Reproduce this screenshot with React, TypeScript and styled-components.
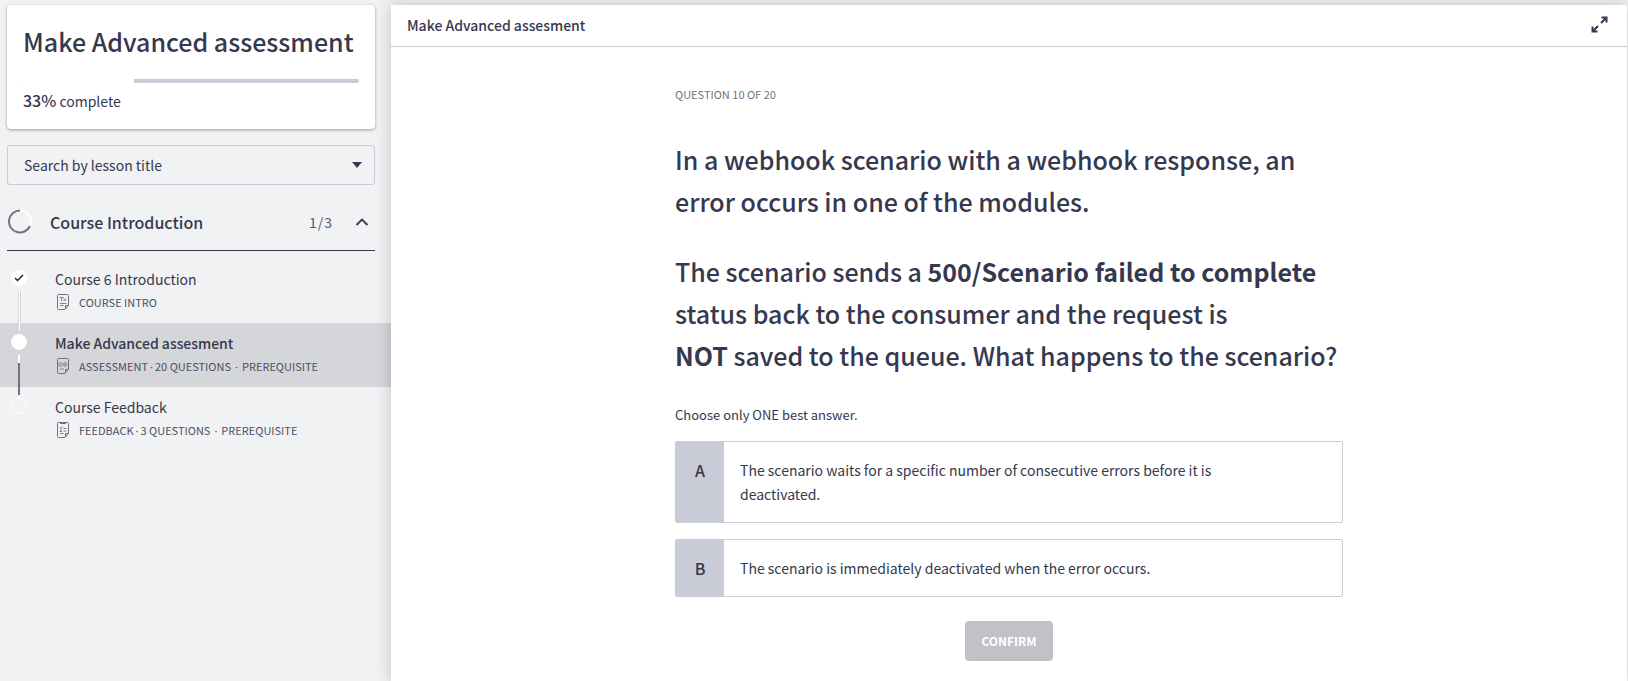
import React, { Fragment, useState } from "react";
import styled, { createGlobalStyle, css } from "styled-components";

const ink = "#35384e";
const line = "#c9cbd6";
const muted = "#6f7287";

const GlobalStyle = createGlobalStyle`
  *, *::before, *::after { box-sizing: border-box; }
  body {
    margin: 0;
    background: #f1f2f4;
    color: ${ink};
    font-family: "Noto Sans CJK SC", "Noto Sans", sans-serif;
    font-size: 14px;
    line-height: 24px;
  }
  h1, h2, p, ol { margin: 0; padding: 0; font-weight: inherit; }
  button, select { font: inherit; color: inherit; }
`;

const Page = styled.div`
  display: grid;
  grid-template-columns: 391px minmax(0, 1fr);
  min-height: 100vh;
  padding: 5px 1px 0 0;
`;

const Sidebar = styled.aside`
  display: flex;
  flex-direction: column;
`;

const SidebarBlock = styled.div`
  margin: 0 16px 16px 7px;
`;

const CourseCard = styled(SidebarBlock)`
  display: flex;
  flex-direction: column;
  padding: 18px 16px 16px;
  border-radius: 4px;
  background: #fff;
  box-shadow: 0 1px 3px rgba(40, 44, 60, 0.45);
`;

const CourseTitle = styled.h1`
  font-size: 25px;
  font-weight: 500;
  line-height: 36px;
  white-space: nowrap;
`;

const Track = styled.div`
  height: 4px;
  margin: 20px 0 6px;
  border-radius: 2px;
  background: ${line};
  overflow: hidden;
`;

const TrackFill = styled.div`
  height: 100%;
  background: #fff;
`;

const Complete = styled.p`
  strong { font-size: 16px; font-weight: 500; line-height: 16px; }
`;

const SearchBox = styled(SidebarBlock)`
  display: grid;
  align-items: center;
  > * { grid-area: 1 / 1; }
  svg { justify-self: end; margin-right: 13px; pointer-events: none; }
`;

const Search = styled.select`
  width: 100%;
  height: 40px;
  padding: 0 32px 0 16px;
  border: 1px solid ${line};
  border-radius: 3px;
  background: transparent;
  appearance: none;
`;

const SectionToggle = styled.button`
  display: flex;
  align-items: center;
  height: 58px;
  margin: -8px 16px 8px 7px;
  padding: 0 6px 0 0;
  border: 0;
  border-bottom: 1px solid ${ink};
  background: none;
  text-align: left;
`;

const SectionTitle = styled.span`
  flex: 1;
  margin-left: 18px;
  font-size: 16px;
  font-weight: 500;
`;

const SectionCount = styled.span`
  margin-right: 22px;
  color: #55586c;
  letter-spacing: 1px;
`;

const Lessons = styled.ol`
  list-style: none;
`;

const Lesson = styled.li<{ $current?: boolean }>`
  position: relative;
  background: ${(p) => (p.$current ? "#d5d6da" : "transparent")};
`;

const LessonLink = styled.a`
  display: block;
  height: 64px;
  padding: 8px 16px 0 55px;
  color: inherit;
  text-decoration: none;
`;

const LessonTitle = styled.span<{ $current?: boolean }>`
  display: block;
  font-weight: ${(p) => (p.$current ? 500 : 400)};
`;

const LessonMeta = styled.span`
  display: flex;
  align-items: center;
  gap: 8px;
  height: 22px;
  color: #4c4f64;
  font-size: 11px;
  white-space: nowrap;
  svg { flex: none; }
`;

const Dot = styled.span<{ $wide?: boolean }>`
  margin: 0 ${(p) => (p.$wide ? 4 : 2)}px;
  font-family: "Noto Sans", sans-serif;
`;

const Marker = styled.span<{ $hollow?: boolean }>`
  position: absolute;
  z-index: 1;
  top: 11px;
  left: 11px;
  display: grid;
  place-items: center;
  width: 16px;
  height: 16px;
  border: 1px solid #fff;
  border-radius: 50%;
  background: ${(p) => (p.$hollow ? "transparent" : "#fff")};
`;

const Connector = styled.span<{ $started?: boolean }>`
  position: absolute;
  z-index: 1;
  top: 32px;
  left: 18px;
  width: 3px;
  height: 40px;
  ${(p) =>
    p.$started
      ? css`
          width: 2px;
          background: linear-gradient(#fff 8px, ${muted} 8px);
        `
      : css`
          border: solid #d5d6da;
          border-width: 0 1px;
          background: #fff;
        `}
`;

const Main = styled.main`
  position: relative;
  display: flex;
  flex-direction: column;
  background: #fff;
  box-shadow: 0 0 14px rgba(40, 44, 60, 0.25);
`;

const TopBar = styled.header`
  display: flex;
  align-items: center;
  justify-content: space-between;
  height: 42px;
  padding: 0 16px 2px;
  border-bottom: 1px solid ${line};
`;

const TopTitle = styled.h2`
  font-size: 14px;
  font-weight: 500;
`;

const IconButton = styled.button`
  display: grid;
  padding: 3px;
  border: 0;
  background: none;
`;

const Question = styled.form`
  display: flex;
  flex-direction: column;
  width: 100%;
  max-width: 668px;
  margin: 0 auto;
  padding: 35px 0 20px;
`;

const Counter = styled.p`
  color: ${muted};
  font-size: 11px;
`;

const Prompt = styled.div`
  display: grid;
  gap: 28px;
  margin: 32px 0 27px;
  font-size: 25px;
  font-weight: 500;
  line-height: 42px;
  strong { font-weight: 700; }
`;

const Hint = styled.p`
  margin-bottom: 14px;
  font-size: 13px;
`;

const Choice = styled.label`
  display: flex;
  margin-bottom: 16px;
  border: 1px solid ${line};
  border-radius: 2px;
  cursor: pointer;
`;

const Radio = styled.input`
  position: absolute;
  opacity: 0;
`;

const Letter = styled.span`
  flex: none;
  width: 48px;
  padding: 16px 0;
  background: ${line};
  font-size: 16px;
  font-weight: 500;
  text-align: center;
`;

const ChoiceText = styled.span`
  padding: 16px 96px 16px 16px;
`;

const Confirm = styled.button`
  align-self: center;
  width: 88px;
  height: 40px;
  margin-top: 8px;
  padding: 0;
  border: 0;
  border-radius: 4px;
  background: #c1c2c8;
  color: #fff;
  font-size: 12px;
  font-weight: 700;
`;

type Kind = "text" | "assessment" | "feedback";

const LessonIcon = ({ kind }: { kind: Kind }) => (
  <svg width="16" height="16" viewBox="0 0 16 16" fill="none" stroke={muted} aria-hidden="true">
    <path d="M3.500.5h9a1 1 0 0 1 1 1V11L10 15.500H3.500a1 1 0 0 1-1-1v-13a1 1 0 0 1 1-1zM13.500 11.500h-3v3.500" />
    {kind === "text" && (
      <path strokeWidth=".9" d="M4.500 3.500h4M6.500 3.500v3.500M8.500 4.500l2.500 2.500M11 4.500l-2.500 2.500M5 9.500h6.500M5 11.500h3.500" />
    )}
    {kind === "assessment" && (
      <path strokeWidth=".8" d="M7 5.500a1.900 1.900 0 1 0 .2 1.500M4.500 6l1 1 2-2M10 4.600a1.900 1.900 0 1 0 .1 0zM9 5.500l2 2M11 5.500l-2 2M5 11h4" />
    )}
    {kind === "feedback" && (
      <>
        <path strokeWidth="2" d="M5 1h6" />
        <path strokeWidth=".9" d="M4.500 5l1.500 1.500L8 4.500M6 6.500V9M8.500 6.500h3M8.500 9h3M4.500 9.500H7M5 11.500h3.500" />
      </>
    )}
  </svg>
);

interface LessonItem {
  title: string;
  meta: string[];
  kind: Kind;
  state: "done" | "current" | "todo";
}

const lessons: LessonItem[] = [
  { title: "Course 6 Introduction", meta: ["COURSE INTRO"], kind: "text", state: "done" },
  {
    title: "Make Advanced assesment",
    meta: ["ASSESSMENT", "20 QUESTIONS", "PREREQUISITE"],
    kind: "assessment",
    state: "current",
  },
  { title: "Course Feedback", meta: ["FEEDBACK", "3 QUESTIONS", "PREREQUISITE"], kind: "feedback", state: "todo" },
];

const choices = [
  { letter: "A", text: "The scenario waits for a specific number of consecutive errors before it is deactivated." },
  { letter: "B", text: "The scenario is immediately deactivated when the error occurs." },
];

export default function App() {
  const [answer, setAnswer] = useState("");
  const progress = 33;

  return (
    <Page>
      <GlobalStyle />
      <Sidebar>
        <CourseCard>
          <CourseTitle>Make Advanced assessment</CourseTitle>
          <Track>
            <TrackFill style={{ width: `${progress}%` }} />
          </Track>
          <Complete>
            <strong>{progress}%</strong> complete
          </Complete>
        </CourseCard>
        <SearchBox>
          <Search aria-label="Search by lesson title">
            <option>Search by lesson title</option>
          </Search>
          <svg width="10" height="6" viewBox="0 0 10 6" aria-hidden="true">
            <path d="M0 0h10L5 6z" fill={ink} />
          </svg>
        </SearchBox>
        <SectionToggle type="button" aria-expanded="true">
          <svg width="25" height="25" viewBox="0 0 25 25" fill="none" strokeWidth="2" aria-hidden="true">
            <circle cx="13" cy="12.500" r="11" stroke="#fff" />
            <path d="M23 17A11 11 0 1 1 13 1.500" stroke={muted} />
          </svg>
          <SectionTitle>Course Introduction</SectionTitle>
          <SectionCount>1/3</SectionCount>
          <svg width="14" height="8" viewBox="0 0 14 8" fill="none" stroke={ink} strokeWidth="1.800" aria-hidden="true">
            <path d="M1.500 7L7 1.500 12.500 7" />
          </svg>
        </SectionToggle>
        <Lessons>
          {lessons.map((lesson, i) => (
            <Lesson key={lesson.title} $current={lesson.state === "current"}>
              <Marker $hollow={lesson.state === "todo"}>
                {lesson.state === "done" && (
                  <svg width="10" height="8" viewBox="0 0 10 8" fill="none" stroke="#22242f" strokeWidth="1.500" aria-hidden="true">
                    <path d="M1 4l2.500 2.500L9 1" />
                  </svg>
                )}
              </Marker>
              {i < lessons.length - 1 && <Connector $started={lesson.state === "current"} />}
              <LessonLink href="#">
                <LessonTitle $current={lesson.state === "current"}>{lesson.title}</LessonTitle>
                <LessonMeta>
                  <LessonIcon kind={lesson.kind} />
                  <span>
                    {lesson.meta.map((part, n) => (
                      <Fragment key={part}>
                        {n > 0 && <Dot $wide={n > 1}>·</Dot>}
                        {part}
                      </Fragment>
                    ))}
                  </span>
                </LessonMeta>
              </LessonLink>
            </Lesson>
          ))}
        </Lessons>
      </Sidebar>
      <Main>
        <TopBar>
          <TopTitle>Make Advanced assesment</TopTitle>
          <IconButton type="button" aria-label="Full screen">
            <svg width="17" height="17" viewBox="0 0 17 17" fill="none" stroke={ink} strokeWidth="2" aria-hidden="true">
              <path d="M10.500 1.500h5v5M15.500 1.500L10 7M6.500 15.500h-5v-5M1.500 15.500L7 10" />
            </svg>
          </IconButton>
        </TopBar>
        <Question onSubmit={(e) => e.preventDefault()}>
          <Counter>QUESTION 10 OF 20</Counter>
          <Prompt>
            <p>In a webhook scenario with a webhook response, an error occurs in one of the modules.</p>
            <p>
              The scenario sends a <strong>500/Scenario failed to complete</strong> status back to the consumer and the
              request is <strong>NOT</strong>&nbsp;saved to the queue. What happens to the scenario?
            </p>
          </Prompt>
          <Hint>Choose only ONE best answer.</Hint>
          {choices.map((choice) => (
            <Choice key={choice.letter}>
              <Radio type="radio" name="answer" checked={answer === choice.letter} onChange={() => setAnswer(choice.letter)} />
              <Letter>{choice.letter}</Letter>
              <ChoiceText>{choice.text}</ChoiceText>
            </Choice>
          ))}
          <Confirm type="submit" disabled={!answer}>
            CONFIRM
          </Confirm>
        </Question>
      </Main>
    </Page>
  );
}
